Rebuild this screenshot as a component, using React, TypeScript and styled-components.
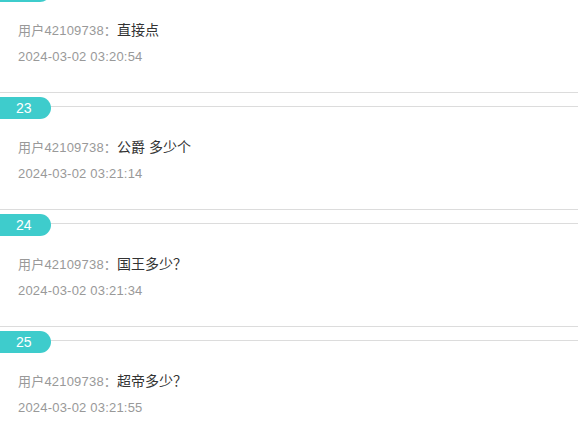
import React from 'react';
import styled, { createGlobalStyle } from 'styled-components';

interface Reply {
  id: number;
  user: string;
  text: string;
  time: string;
}

const replies: Reply[] = [
  { id: 22, user: '用户42109738', text: '直接点', time: '2024-03-02 03:20:54' },
  { id: 23, user: '用户42109738', text: '公爵 多少个', time: '2024-03-02 03:21:14' },
  { id: 24, user: '用户42109738', text: '国王多少？', time: '2024-03-02 03:21:34' },
  { id: 25, user: '用户42109738', text: '超帝多少？', time: '2024-03-02 03:21:55' },
];

const GlobalStyle = createGlobalStyle`
  html, body {
    margin: 0;
    padding: 0;
    background: #fff;
    overflow: hidden;
  }
  body {
    font-family: "Liberation Sans", "Noto Sans CJK SC", sans-serif;
  }
`;

const App: React.FC = () => {
  return (
    <>
      <GlobalStyle />
      <List>
        {replies.map(reply => (
          <Item key={reply.id}>
            <Header>
              <Floor>{reply.id}</Floor>
              <Rule />
            </Header>
            <Message>
              <UserName>{reply.user}：</UserName>
              <Content>{reply.text}</Content>
            </Message>
            <Time>{reply.time}</Time>
          </Item>
        ))}
      </List>
    </>
  );
};

// Styled Components
const List = styled.div`
  margin-top: -25px;
`;

const Item = styled.div`
  border-top: 1px solid #dcdcdc;
  padding-bottom: 25px;
`;

const Header = styled.div`
  display: flex;
  align-items: flex-start;
  margin-top: 4px;
  height: 22px;
`;

const Floor = styled.div`
  height: 22px;
  line-height: 22px;
  padding: 0 19px 0 16px;
  background-color: #3ecccc;
  border-radius: 0 11px 11px 0;
  color: #fff;
  font-size: 14px;
`;

const Rule = styled.div`
  flex: 1;
  height: 1px;
  margin-top: 9px;
  background-color: #dcdcdc;
`;

const Message = styled.div`
  display: flex;
  align-items: baseline;
  height: 20px;
  margin-top: 18px;
  padding-left: 18px;
  line-height: 20px;
  font-size: 13px;
`;

const UserName = styled.span`
  color: #999;
  letter-spacing: 0.2px;
`;

const Content = styled.span`
  color: #333;
  font-size: 14px;
  line-height: 20px;
`;

const Time = styled.div`
  margin-top: 7px;
  padding-left: 18px;
  line-height: 20px;
  font-size: 13px;
  letter-spacing: 0.2px;
  color: #999;
`;

export default App;
